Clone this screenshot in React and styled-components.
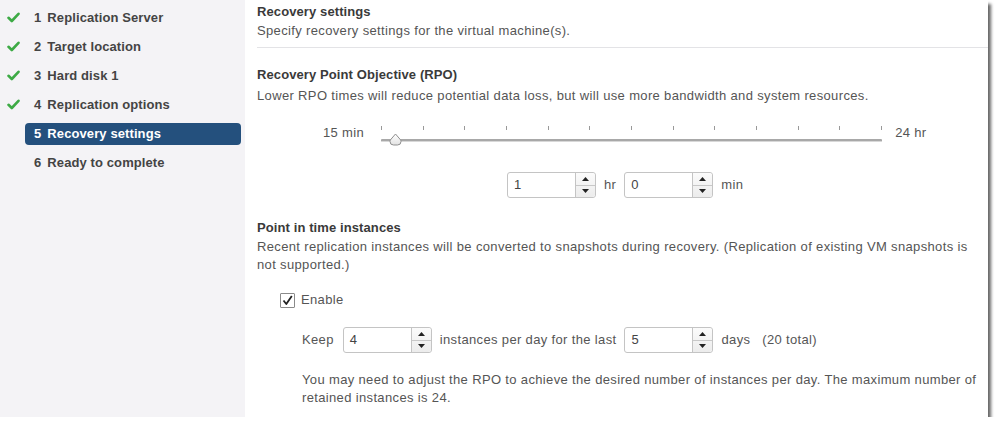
import React from 'react';
import styled, { createGlobalStyle } from 'styled-components';

const GlobalStyle = createGlobalStyle`
  html, body {
    margin: 0;
    padding: 0;
    background: #ffffff;
  }
  body {
    font-family: "Liberation Sans", Arial, sans-serif;
    font-size: 13px;
    color: #555;
  }
`;

const Frame = styled.div`
  display: flex;
  width: 988px;
  height: 417px;
  background: #fff;
  box-shadow: 3px 4px 3px rgba(0, 0, 0, 0.6);
  overflow: hidden;
`;

const Nav = styled.div`
  width: 245px;
  flex-shrink: 0;
  background: #f4f3f6;
  padding-top: 3px;
  box-sizing: border-box;
`;

const NavRow = styled.div`
  display: flex;
  align-items: center;
  height: 29px;
`;

const CheckSlot = styled.div`
  width: 24px;
  display: flex;
  justify-content: center;
  padding-left: 1px;
`;

const NavLabel = styled.div`
  width: 216px;
  height: 22px;
  box-sizing: border-box;
  padding-left: 9px;
  display: flex;
  align-items: center;
  border-radius: 4px;
  font-weight: bold;
  font-size: 13px;
  letter-spacing: 0.1px;
  color: ${p => (p.$active ? '#fff' : '#444')};
  background: ${p => (p.$active ? '#24507d' : 'transparent')};
  span {
    margin-right: 6px;
  }
`;

const Content = styled.div`
  flex: 1;
  padding: 3px 6px 0 12px;
  line-height: 18px;
  letter-spacing: 0.35px;
`;

const Title = styled.div`
  font-weight: bold;
  color: #3a3a3a;
  letter-spacing: 0.1px;
  margin-top: ${p => p.$mt || 0}px;
`;

const Text = styled.div`
  margin-top: ${p => p.$mt || 0}px;
  padding-left: ${p => p.$indent || 0}px;
  padding-right: ${p => p.$pr || 0}px;
`;

const Separator = styled.div`
  height: 1px;
  background: #e3e3e6;
  margin: 7px -6px 0 0;
`;

const SliderRow = styled.div`
  display: flex;
  align-items: center;
  margin-top: 17px;
  padding-left: 66px;
  height: 24px;
`;

const SliderEnd = styled.span`
  margin-right: ${p => p.$mr || 0}px;
  margin-left: ${p => p.$ml || 0}px;
  position: relative;
  top: -1px;
`;

const SliderTrack = styled.div`
  position: relative;
  width: 501px;
  height: 24px;
`;

const TrackLine = styled.div`
  position: absolute;
  left: 0;
  right: 0;
  top: 17px;
  height: 2px;
  background: #a8a8a8;
  border-bottom: 1px solid #d8d8d8;
  border-radius: 1px;
`;

const Ticks = styled.div`
  position: absolute;
  left: 0;
  right: 0;
  top: 4px;
  display: flex;
  justify-content: space-between;
`;

const Tick = styled.div`
  width: 1px;
  height: 4px;
  background: #999;
`;

const Thumb = styled.svg`
  position: absolute;
  left: 8px;
  top: 11px;
`;

const SpinRow = styled.div`
  display: flex;
  align-items: center;
  gap: 8px;
  margin-top: ${p => p.$mt || 0}px;
  padding-left: ${p => p.$indent || 0}px;
`;

const SpinBox = styled.div`
  display: flex;
  width: 89px;
  height: 26px;
  box-sizing: border-box;
  border: 1px solid #c4c4c4;
  border-radius: 3px;
  background: #fff;
  margin-left: ${p => p.$ml || 0}px;
`;

const SpinValue = styled.div`
  flex: 1;
  display: flex;
  align-items: center;
  padding-left: 6px;
  font-size: 13px;
  color: #444;
`;

const SpinButtons = styled.div`
  width: 19px;
  display: flex;
  flex-direction: column;
  border-left: 1px solid #c4c4c4;
  background: linear-gradient(#fbfbfb, #ececec);
  border-radius: 0 3px 3px 0;
`;

const SpinArrow = styled.div`
  flex: 1;
  display: flex;
  align-items: center;
  justify-content: center;
  & + & {
    border-top: 1px solid #c8c8c8;
  }
`;

const CheckRow = styled.label`
  display: flex;
  align-items: center;
  gap: 6px;
  margin-top: 17px;
  padding-left: 23px;
  height: 18px;
  color: #555;
`;

const CheckBox = styled.span`
  width: 13px;
  height: 13px;
  border: 1px solid #8a8a8a;
  border-radius: 1px;
  background: #fff;
  display: flex;
  align-items: center;
  justify-content: center;
`;

function GreenCheck() {
  return (
    <svg width="13" height="11" viewBox="0 0 13 11">
      <path d="M1.5 5.8 L4.8 9 L11.5 1.8" fill="none" stroke="#3daa45" strokeWidth="2.6" strokeLinecap="round" strokeLinejoin="round" />
    </svg>
  );
}

function Arrow({ down }) {
  return (
    <svg width="7" height="4" viewBox="0 0 7 4">
      <path d={down ? 'M0 0 L7 0 L3.5 4 Z' : 'M0 4 L7 4 L3.5 0 Z'} fill="#222" />
    </svg>
  );
}

function Spinner({ value, ml }) {
  return (
    <SpinBox $ml={ml}>
      <SpinValue>{value}</SpinValue>
      <SpinButtons>
        <SpinArrow><Arrow /></SpinArrow>
        <SpinArrow><Arrow down /></SpinArrow>
      </SpinButtons>
    </SpinBox>
  );
}

const steps = [
  { n: 1, label: 'Replication Server', done: true },
  { n: 2, label: 'Target location', done: true },
  { n: 3, label: 'Hard disk 1', done: true },
  { n: 4, label: 'Replication options', done: true },
  { n: 5, label: 'Recovery settings', active: true },
  { n: 6, label: 'Ready to complete' },
];

export default function App() {
  return (
    <>
      <GlobalStyle />
      <Frame>
        <Nav>
          {steps.map(s => (
            <NavRow key={s.n}>
              <CheckSlot>{s.done && <GreenCheck />}</CheckSlot>
              <NavLabel $active={s.active}>
                <span>{s.n}</span>
                {s.label}
              </NavLabel>
            </NavRow>
          ))}
        </Nav>

        <Content>
          <Title>Recovery settings</Title>
          <Text $mt={1}>Specify recovery settings for the virtual machine(s).</Text>
          <Separator />

          <Title $mt={18}>Recovery Point Objective (RPO)</Title>
          <Text $mt={3}>
            Lower RPO times will reduce potential data loss, but will use more bandwidth and system resources.
          </Text>

          <SliderRow>
            <SliderEnd $mr={17}>15 min</SliderEnd>
            <SliderTrack>
              <Ticks>
                {Array.from({ length: 13 }).map((_, i) => (
                  <Tick key={i} />
                ))}
              </Ticks>
              <TrackLine />
              <Thumb width="13" height="13" viewBox="0 0 13 13">
                <defs>
                  <linearGradient id="tg" x1="0" y1="0" x2="0" y2="1">
                    <stop offset="0" stopColor="#ffffff" />
                    <stop offset="1" stopColor="#e2e2e2" />
                  </linearGradient>
                </defs>
                <path
                  d="M6.5 1 L11 6.2 Q12 7.2 12 8.5 Q12 12 8.5 12 L4.5 12 Q1 12 1 8.5 Q1 7.2 2 6.2 Z"
                  fill="url(#tg)"
                  stroke="#8f8f8f"
                  strokeWidth="1"
                  strokeLinejoin="round"
                />
              </Thumb>
            </SliderTrack>
            <SliderEnd $ml={13}>24 hr</SliderEnd>
          </SliderRow>

          <SpinRow $mt={26} $indent={250}>
            <Spinner value="1" />
            <span>hr</span>
            <Spinner value="0" />
            <span>min</span>
          </SpinRow>

          <Title $mt={21}>Point in time instances</Title>
          <Text $mt={1} $pr={4}>
            Recent replication instances will be converted to snapshots during recovery. (Replication of existing VM snapshots is not supported.)
          </Text>

          <CheckRow>
            <CheckBox>
              <svg width="11" height="11" viewBox="0 0 11 11">
                <path d="M1.5 5.5 L4.3 9 L9.8 1" fill="none" stroke="#222" strokeWidth="1.8" strokeLinejoin="round" />
              </svg>
            </CheckBox>
            Enable
          </CheckRow>

          <SpinRow $mt={18} $indent={45}>
            <span>Keep</span>
            <Spinner value="4" ml={1} />
            <span>instances per day for the last</span>
            <Spinner value="5" />
            <span>days&nbsp;&nbsp;&nbsp;(20 total)</span>
          </SpinRow>

          <Text $mt={18} $indent={45}>
            You may need to adjust the RPO to achieve the desired number of instances per day. The maximum number of retained instances is 24.
          </Text>
        </Content>
      </Frame>
    </>
  );
}
